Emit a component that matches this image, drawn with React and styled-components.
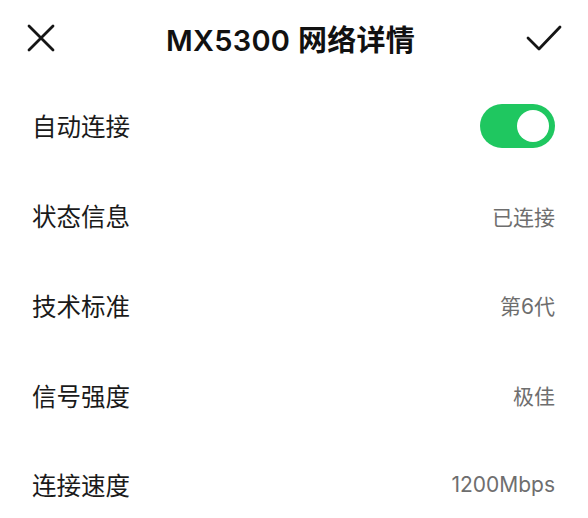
import React, { useState } from 'react'
import styled, { createGlobalStyle } from 'styled-components'

const GlobalStyle = createGlobalStyle`
  html, body {
    margin: 0;
    padding: 0;
    background: #fff;
  }
  body {
    font-family: Inter, "Noto Sans CJK SC", sans-serif;
    color: #111;
  }
`

const Page = styled.div`
  width: 588px;
  background: #fff;
`

const Header = styled.div`
  display: flex;
  align-items: center;
  justify-content: space-between;
  height: 76px;
  padding: 0 26px 0 27px;
`

const IconButton = styled.button`
  display: flex;
  align-items: center;
  justify-content: center;
  width: ${p => p.$size}px;
  height: ${p => p.$size}px;
  padding: 0;
  border: none;
  background: none;
  color: #151515;
`

const Title = styled.h1`
  margin: 0;
  font-size: 29px;
  font-weight: 600;
  letter-spacing: 0.3px;
  color: #111;
`

const List = styled.div`
  display: flex;
  flex-direction: column;
  padding-top: 5px;
`

const Row = styled.div`
  display: flex;
  align-items: center;
  justify-content: space-between;
  height: 89.75px;
  padding: 0 33px 0 32px;
`

const Label = styled.span`
  font-family: "Noto Sans CJK SC", sans-serif;
  font-size: 24.5px;
  color: #1a1a1a;
`

const Value = styled.span`
  font-size: 21px;
  color: #6e6e6e;
`

const Switch = styled.button`
  display: flex;
  align-items: center;
  justify-content: ${p => (p.$on ? 'flex-end' : 'flex-start')};
  width: 75px;
  height: 44px;
  padding: 0 6px;
  border: none;
  border-radius: 22px;
  background: ${p => (p.$on ? '#1fc760' : '#d8d8d8')};
  box-sizing: border-box;
`

const Knob = styled.span`
  width: 32px;
  height: 32px;
  border-radius: 50%;
  background: #fff;
`

const rows = [
  { label: '状态信息', value: '已连接' },
  { label: '技术标准', value: '第6代' },
  { label: '信号强度', value: '极佳' },
  { label: '连接速度', value: '1200Mbps' },
]

export default function App() {
  const [auto, setAuto] = useState(true)
  return (
    <Page>
      <GlobalStyle />
      <Header>
        <IconButton $size={28}>
          <svg width="28" height="28" viewBox="0 0 28 28" fill="none" stroke="currentColor" strokeWidth="2.8" strokeLinecap="round">
            <path d="M2 2 L26 26 M26 2 L2 26" />
          </svg>
        </IconButton>
        <Title>MX5300 网络详情</Title>
        <IconButton $size={36}>
          <svg width="36" height="28" viewBox="0 0 36 28" fill="none" stroke="currentColor" strokeWidth="2.8" strokeLinecap="round" strokeLinejoin="round">
            <path d="M2 14 L13 25 L34 3" />
          </svg>
        </IconButton>
      </Header>
      <List>
        <Row>
          <Label>自动连接</Label>
          <Switch $on={auto} onClick={() => setAuto(!auto)}>
            <Knob />
          </Switch>
        </Row>
        {rows.map(r => (
          <Row key={r.label}>
            <Label>{r.label}</Label>
            <Value>{r.value}</Value>
          </Row>
        ))}
      </List>
    </Page>
  )
}
